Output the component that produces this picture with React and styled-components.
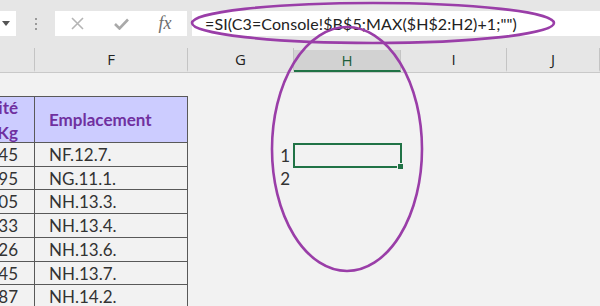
import React from 'react';
import styled, { createGlobalStyle } from 'styled-components';

const GlobalStyle = createGlobalStyle`
  html, body {
    margin: 0;
    padding: 0;
  }
  body {
    background: #f2f2f2;
    font-family: Lato, "Liberation Sans", sans-serif;
    overflow: hidden;
  }
`;

const COLS = '35px 153px 106px 107px 106px 1fr';

const rows = [
  { qty: '45', place: 'NF.12.7.', num: '1', active: true },
  { qty: '95', place: 'NG.11.1.', num: '2' },
  { qty: '05', place: 'NH.13.3.' },
  { qty: '33', place: 'NH.13.4.' },
  { qty: '26', place: 'NH.13.6.' },
  { qty: '45', place: 'NH.13.7.' },
  { qty: '87', place: 'NH.14.2.' },
];

function App() {
  return (
    <Page>
      <GlobalStyle />
      <TopBar>
        <NameBox>
          <svg width="8" height="5" viewBox="0 0 8 5">
            <path d="M0 0 L8 0 L4 5 Z" fill="#555" />
          </svg>
        </NameBox>
        <Grip>
          <Dot />
          <Dot />
          <Dot />
        </Grip>
        <FxBox>
          <FxSlot>
            <svg width="13" height="13" viewBox="0 0 13 13">
              <path d="M1 1 L12 12 M12 1 L1 12" stroke="#b5b5b5" strokeWidth="1.6" />
            </svg>
          </FxSlot>
          <FxSlot>
            <svg width="15" height="12" viewBox="0 0 15 12">
              <path d="M1 6 L5.5 10.5 L14 1.5" stroke="#a9a9a9" strokeWidth="2.6" fill="none" />
            </svg>
          </FxSlot>
          <FxSlot>
            <FxLabel>fx</FxLabel>
          </FxSlot>
        </FxBox>
        <FormulaBox>=SI(C3=Console!$B$5;MAX($H$2:H2)+1;"")</FormulaBox>
      </TopBar>

      <ColHeaders>
        <ColHead />
        <ColHead>F</ColHead>
        <ColHead>G</ColHead>
        <ColHead $active>H</ColHead>
        <ColHead>I</ColHead>
        <ColHead>J</ColHead>
      </ColHeaders>

      <Sheet>
        <Cell />
        <Cell />
        <Cell />
        <Cell />
        <Cell />
        <Cell />

        <HeadCell $first>
          <span>ité</span>
          <span>Kg</span>
        </HeadCell>
        <HeadCell>Emplacement</HeadCell>
        <Cell />
        <Cell />
        <Cell />
        <Cell />

        {rows.map((r, i) => (
          <React.Fragment key={i}>
            <DataCell $first>{r.qty}</DataCell>
            <DataCell>{r.place}</DataCell>
            <NumCell>{r.num}</NumCell>
            {r.active ? (
              <ActiveCell>
                <FillHandle />
              </ActiveCell>
            ) : (
              <Cell />
            )}
            <Cell />
            <Cell />
          </React.Fragment>
        ))}
      </Sheet>

      <Annotations width="600" height="306" viewBox="0 0 600 306">
        <ellipse cx="373" cy="23" rx="181" ry="20" />
        <ellipse cx="347" cy="149" rx="75" ry="122" />
      </Annotations>
    </Page>
  );
}

export default App;

const Page = styled.div`
  position: relative;
  width: 600px;
  height: 306px;
  overflow: hidden;
  background: #f2f2f2;
`;

const TopBar = styled.div`
  display: flex;
  align-items: flex-start;
  height: 48px;
  padding-top: 11px;
  box-sizing: border-box;
  background: #e6e6e6;
`;

const NameBox = styled.div`
  width: 16px;
  height: 25px;
  background: #fff;
  display: flex;
  align-items: center;
  padding-left: 2px;
  box-sizing: border-box;
`;

const Grip = styled.div`
  width: 39px;
  height: 25px;
  display: flex;
  flex-direction: column;
  align-items: center;
  justify-content: center;
  gap: 3px;
`;

const Dot = styled.span`
  width: 2px;
  height: 2px;
  background: #9a9a9a;
`;

const FxBox = styled.div`
  width: 132px;
  height: 25px;
  background: #fff;
  display: flex;
`;

const FxSlot = styled.div`
  width: 44px;
  display: flex;
  align-items: center;
  justify-content: center;
`;

const FxLabel = styled.span`
  font-family: "Liberation Serif", serif;
  font-style: italic;
  font-size: 18px;
  color: #6e6e6e;
`;

const FormulaBox = styled.div`
  flex: 1;
  height: 25px;
  margin-left: 5px;
  background: #fff;
  padding-left: 13px;
  font-size: 16px;
  letter-spacing: 0.1px;
  line-height: 25px;
  color: #222;
  white-space: nowrap;
`;

const ColHeaders = styled.div`
  display: grid;
  grid-template-columns: ${COLS};
  height: 24px;
  background: #e6e6e6;
  border-bottom: 1px solid #c9c9c9;
  box-sizing: content-box;
`;

const ColHead = styled.div`
  display: flex;
  align-items: center;
  justify-content: center;
  border-right: 1px solid #c4c4c4;
  font-family: "Open Sans", sans-serif;
  font-size: 15px;
  color: ${(p) => (p.$active ? '#1e5e3a' : '#222')};
  background: ${(p) => (p.$active ? '#d2d2d2' : 'transparent')};
  border-bottom: 2px solid ${(p) => (p.$active ? '#217346' : 'transparent')};
  box-sizing: border-box;
  margin-top: ${(p) => (p.$active ? '2px' : '0')};
`;

const Sheet = styled.div`
  display: grid;
  grid-template-columns: ${COLS};
  grid-template-rows: 23px 47px 24px 23px 24px 24px 24px 23px 24px;
`;

const Cell = styled.div``;

const HeadCell = styled.div`
  display: flex;
  flex-direction: column;
  justify-content: center;
  align-items: ${(p) => (p.$first ? 'flex-end' : 'flex-start')};
  padding: ${(p) => (p.$first ? '0 16px 0 0' : '0 0 0 14px')};
  background: #ccccff;
  border-top: 1px solid #595959;
  border-right: 1px solid #595959;
  border-bottom: 1px solid #595959;
  box-sizing: border-box;
  font-weight: 700;
  font-size: 17px;
  line-height: 25px;
  color: #7030a0;
`;

const DataCell = styled.div`
  display: flex;
  align-items: center;
  justify-content: ${(p) => (p.$first ? 'flex-end' : 'flex-start')};
  padding: ${(p) => (p.$first ? '0 16px 0 0' : '0 0 0 14px')};
  border-right: 1px solid #595959;
  border-bottom: 1px solid #595959;
  box-sizing: border-box;
  font-size: 17px;
  color: #333;
`;

const NumCell = styled.div`
  display: flex;
  align-items: center;
  justify-content: flex-end;
  padding-right: 4px;
  font-size: 17px;
  color: #333;
`;

const ActiveCell = styled.div`
  position: relative;
  margin: 0 -1px -1px -1px;
  border: 2px solid #217346;
`;

const FillHandle = styled.span`
  position: absolute;
  right: -4px;
  bottom: -4px;
  width: 5px;
  height: 5px;
  background: #217346;
  border: 1px solid #f2f2f2;
`;

const Annotations = styled.svg`
  position: absolute;
  top: 0;
  left: 0;
  pointer-events: none;

  ellipse {
    fill: none;
    stroke: #9a3ea8;
    stroke-width: 2.6;
  }
`;
